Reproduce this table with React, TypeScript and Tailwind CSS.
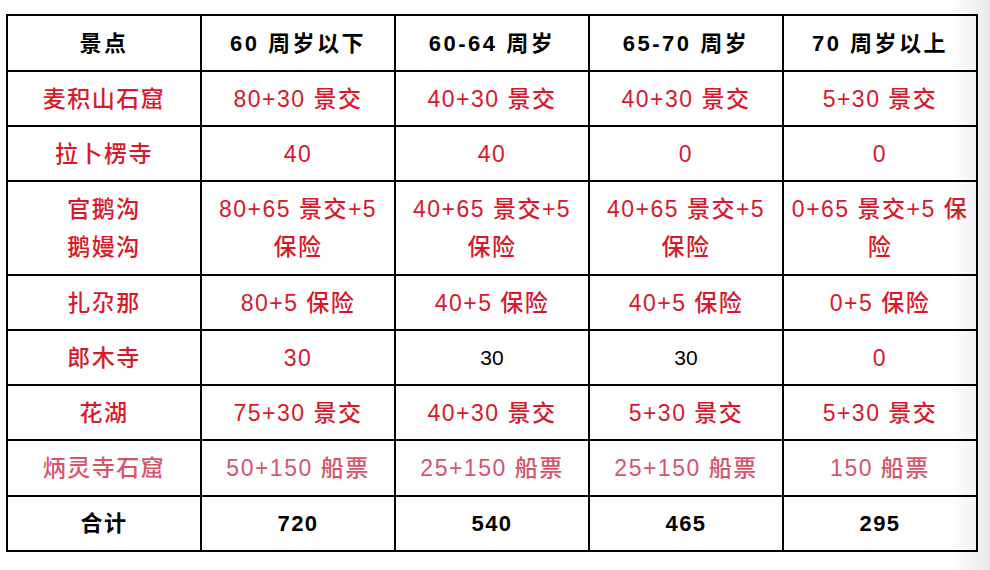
import React from 'react'

type Cell = { text: string[]; tone?: 'red' | 'pink' | 'plain' | 'bold' }

const headers = ['景点', '60 周岁以下', '60-64 周岁', '65-70 周岁', '70 周岁以上']

const rows: { h: string; cells: Cell[] }[] = [
  {
    h: 'h-[55px]',
    cells: [
      { text: ['麦积山石窟'] },
      { text: ['80+30 景交'] },
      { text: ['40+30 景交'] },
      { text: ['40+30 景交'] },
      { text: ['5+30 景交'] },
    ],
  },
  {
    h: 'h-[55px]',
    cells: [{ text: ['拉卜楞寺'] }, { text: ['40'] }, { text: ['40'] }, { text: ['0'] }, { text: ['0'] }],
  },
  {
    h: 'h-[94px]',
    cells: [
      { text: ['官鹅沟', '鹅嫚沟'] },
      { text: ['80+65 景交+5', '保险'] },
      { text: ['40+65 景交+5', '保险'] },
      { text: ['40+65 景交+5', '保险'] },
      { text: ['0+65 景交+5 保', '险'] },
    ],
  },
  {
    h: 'h-[55px]',
    cells: [
      { text: ['扎尕那'] },
      { text: ['80+5 保险'] },
      { text: ['40+5 保险'] },
      { text: ['40+5 保险'] },
      { text: ['0+5 保险'] },
    ],
  },
  {
    h: 'h-[55px]',
    cells: [
      { text: ['郎木寺'] },
      { text: ['30'] },
      { text: ['30'], tone: 'plain' },
      { text: ['30'], tone: 'plain' },
      { text: ['0'] },
    ],
  },
  {
    h: 'h-[55px]',
    cells: [
      { text: ['花湖'] },
      { text: ['75+30 景交'] },
      { text: ['40+30 景交'] },
      { text: ['5+30 景交'] },
      { text: ['5+30 景交'] },
    ],
  },
  {
    h: 'h-[56px]',
    cells: [
      { text: ['炳灵寺石窟'], tone: 'pink' },
      { text: ['50+150 船票'], tone: 'pink' },
      { text: ['25+150 船票'], tone: 'pink' },
      { text: ['25+150 船票'], tone: 'pink' },
      { text: ['150 船票'], tone: 'pink' },
    ],
  },
  {
    h: 'h-[55px]',
    cells: [
      { text: ['合计'], tone: 'bold' },
      { text: ['720'], tone: 'bold' },
      { text: ['540'], tone: 'bold' },
      { text: ['465'], tone: 'bold' },
      { text: ['295'], tone: 'bold' },
    ],
  },
]

const toneClass = {
  red: 'text-[#d7192b] text-[23px] tracking-[1.5px] font-medium',
  pink: 'text-[#d4566b] text-[23px] tracking-[1.5px] font-medium',
  plain: 'text-black text-[21px]',
  bold: 'text-black font-bold text-[22px] tracking-[1.5px]',
}

export default function App() {
  return (
    <div
      className="w-[990px] h-[570px] overflow-hidden bg-[linear-gradient(to_right,#ffffff_952px,#e9e9e9_990px)] pt-[14px] pl-[6px]"
      style={{ fontFamily: '"Liberation Sans", "Noto Sans CJK SC", sans-serif' }}
    >
      <table className="border-collapse table-fixed w-[970px]">
        <colgroup>
          <col className="w-[194px]" />
          <col className="w-[194px]" />
          <col className="w-[194px]" />
          <col className="w-[194px]" />
          <col className="w-[194px]" />
        </colgroup>
        <thead>
          <tr className="h-[56px]">
            {headers.map((t) => (
              <th
                key={t}
                className="border-2 border-black text-center align-middle font-bold text-[22px] tracking-[2.5px] text-black"
              >
                {t}
              </th>
            ))}
          </tr>
        </thead>
        <tbody>
          {rows.map((r, i) => (
            <tr key={i} className={r.h}>
              {r.cells.map((c, j) => (
                <td
                  key={j}
                  className={`border-2 border-black text-center align-middle leading-[38px] ${toneClass[c.tone ?? 'red']}`}
                >
                  {c.text.map((line, k) => (
                    <div key={k}>{line}</div>
                  ))}
                </td>
              ))}
            </tr>
          ))}
        </tbody>
      </table>
    </div>
  )
}
